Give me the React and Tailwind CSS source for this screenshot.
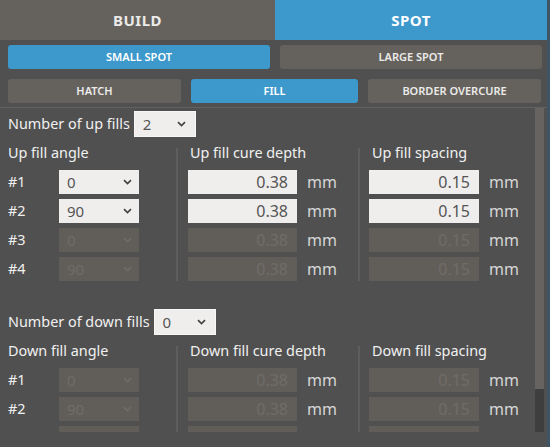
import React from 'react';

const font = { fontFamily: '"Noto Sans", "Open Sans", sans-serif' };

const Chevron = ({ className = '' }) => (
    <svg width="9" height="6" viewBox="0 0 9 6" className={className}>
        <path d="M1 1.2 L4.5 4.6 L8 1.2" fill="none" stroke="currentColor" strokeWidth="1.7" />
    </svg>
);

const Select = ({ value, enabled, width = 'w-[80px]' }) => (
    <div
        className={`${width} h-6 flex items-center justify-between pl-2 pr-[7px] text-[15px] ${
            enabled ? 'bg-[#efeeec] text-[#555]' : 'bg-[#615e5a] text-[#6f6c68]'
        }`}
    >
        <span>{value}</span>
        <Chevron className={enabled ? 'text-[#444]' : 'text-[#6f6c68]'} />
    </div>
);

const TopSelect = ({ value }) => (
    <div className="w-[60px] h-6 flex items-center justify-between pl-2 pr-[9px] text-[15px] bg-[#efeeec] text-[#555] outline outline-1 outline-[#f7f7f7]">
        <span>{value}</span>
        <Chevron className="text-[#444]" />
    </div>
);

const NumberField = ({ value, enabled, width }) => (
    <div className="flex items-center">
        <div
            className={`${width} h-6 flex items-center justify-end pr-[9px] text-[16px] ${
                enabled ? 'bg-[#efeeec] text-[#555]' : 'bg-[#615e5a] text-[#6f6c68]'
            }`}
        >
            {value}
        </div>
        <span className="ml-[10px] text-[16px] text-[#d6d6d6]">mm</span>
    </div>
);

const Divider = () => <div className="w-[2px] mt-[7px] self-stretch bg-[#5e5e5e]" />;

const FillSection = ({ kind, count, angles, depth, spacing, rows }) => {
    const title = kind === 'up' ? 'Up' : 'Down';
    return (
        <div>
            <div className="flex items-center h-6 gap-[5px]">
                <span className="text-[14.4px] text-[#f0f0f0]">Number of {kind} fills</span>
                <TopSelect value={count} />
            </div>
            <div className="flex mt-[5px] pb-[5px]">
                <div className="w-[168px]">
                    <div className="h-6 flex items-center text-[14.4px] text-[#f0f0f0]">{title} fill angle</div>
                    <div className="mt-[5px] flex flex-col gap-[5px]">
                        {rows.map((n, i) => (
                            <div key={n} className="flex items-center h-6">
                                <span className="w-[51px] text-[14.4px] text-[#f0f0f0]">#{n}</span>
                                <Select value={angles[i]} enabled={i < count} />
                            </div>
                        ))}
                    </div>
                </div>
                <Divider />
                <div className="w-[180px] pl-[10px]">
                    <div className="h-6 flex items-center pl-[2px] text-[14.4px] text-[#f0f0f0]">{title} fill cure depth</div>
                    <div className="mt-[5px] flex flex-col gap-[5px]">
                        {rows.map((n, i) => (
                            <NumberField key={n} value={depth} enabled={i < count} width="w-[109px]" />
                        ))}
                    </div>
                </div>
                <Divider />
                <div className="pl-[9px]">
                    <div className="h-6 flex items-center pl-[3px] text-[14.4px] text-[#f0f0f0]">{title} fill spacing</div>
                    <div className="mt-[5px] flex flex-col gap-[5px]">
                        {rows.map((n, i) => (
                            <NumberField key={n} value={spacing} enabled={i < count} width="w-[110px]" />
                        ))}
                    </div>
                </div>
            </div>
        </div>
    );
};

export default function App() {
    return (
        <div style={font} className="w-[550px] h-[447px] bg-[#505050] border-r-[3px] border-[#3f5566] overflow-hidden">
            <div className="flex h-10">
                <div className="w-[275px] bg-[#65625d] flex items-center justify-center text-[15px] font-bold text-[#ecebe9] tracking-[0.5px]">
                    BUILD
                </div>
                <div className="flex-1 bg-[#3d99cc] flex items-center justify-center text-[15px] font-bold text-white tracking-[0.5px]">
                    SPOT
                </div>
            </div>

            <div className="px-2 pt-[5px] pr-[5px]">
                <div className="flex gap-[10px] h-6">
                    <button className="w-[262px] rounded-[3px] bg-[#3d99cc] text-[11px] font-semibold text-white">SMALL SPOT</button>
                    <button className="w-[262px] rounded-[3px] bg-[#65625d] text-[11px] font-semibold text-[#ecebe9]">LARGE SPOT</button>
                </div>
                <div className="flex gap-[10px] h-6 mt-[10px]">
                    <button className="w-[173px] rounded-[3px] bg-[#65625d] text-[11px] font-semibold text-[#ecebe9]">HATCH</button>
                    <button className="w-[167px] rounded-[3px] bg-[#3d99cc] text-[11px] font-semibold text-white">FILL</button>
                    <button className="w-[173px] rounded-[3px] bg-[#65625d] text-[11px] font-semibold text-[#ecebe9]">BORDER OVERCURE</button>
                </div>
            </div>

            <div className="mt-1 border-t border-[#616161] flex h-[325px]">
                <div className="flex-1 overflow-hidden pl-2 pt-1">
                    <FillSection kind="up" count={2} angles={[0, 90, 0, 90]} depth="0.38" spacing="0.15" rows={[1, 2, 3, 4]} />
                    <div className="mt-[24px]">
                        <FillSection kind="down" count={0} angles={[0, 90, 0, 90]} depth="0.38" spacing="0.15" rows={[1, 2, 3, 4]} />
                    </div>
                </div>
                <div className="w-[9px] mr-[3px] flex flex-col">
                    <div className="h-[281px] bg-[#676360]" />
                    <div className="flex-1 bg-[#3e3e3e]" />
                </div>
            </div>
        </div>
    );
}
